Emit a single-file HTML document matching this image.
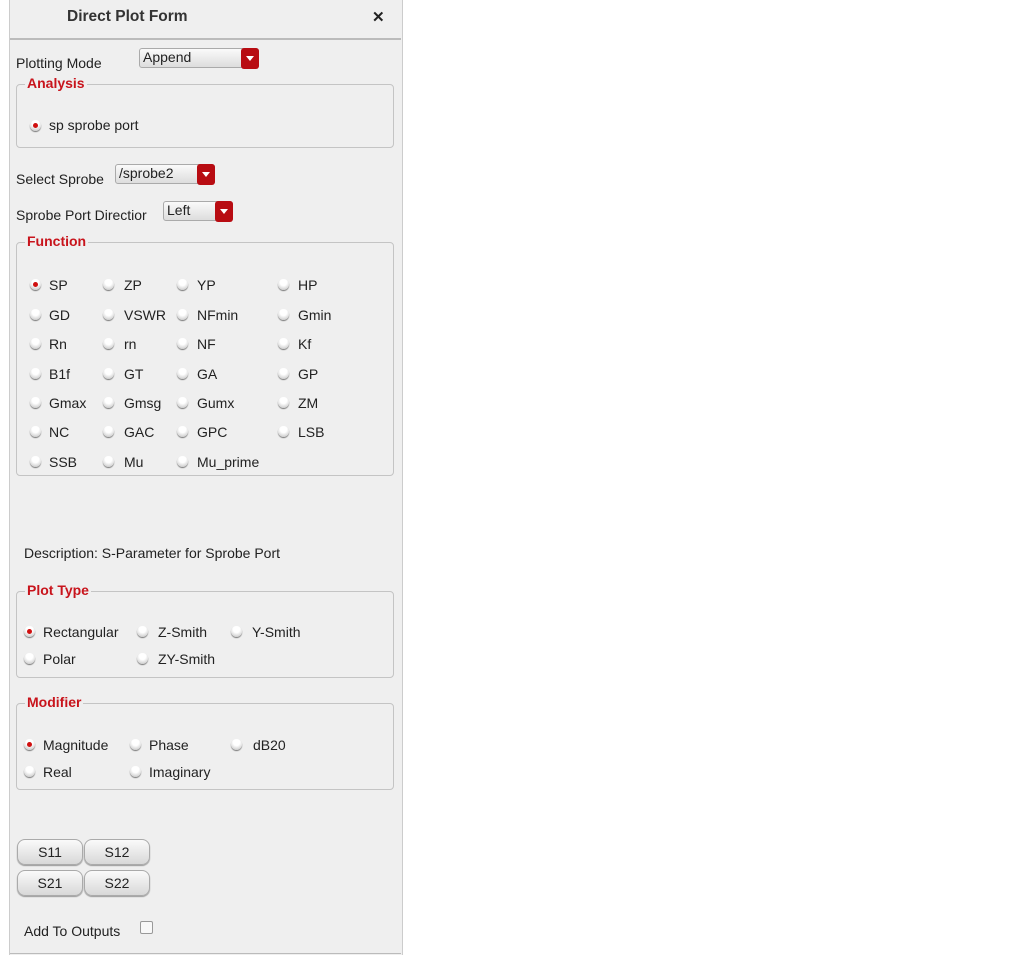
<!DOCTYPE html><html><head><style>
body{margin:0;width:1013px;height:967px;background:#fff;font-family:"Liberation Sans",sans-serif;font-size:14px;color:#222;position:relative;overflow:hidden}
.p{position:absolute;left:9px;top:0;width:392px;height:955px;background:#efefef;border-left:1px solid #ccc;border-right:1px solid #ccc}
.a{position:absolute;white-space:nowrap}
.r{position:absolute;width:11px;height:11px;border-radius:50%;background:radial-gradient(circle at 50% 30%,#fff 35%,#d4d4d4 75%,#999);box-shadow:0 1px 1px #777}
.r.s::after{content:"";position:absolute;left:3px;top:3px;width:5px;height:5px;border-radius:50%;background:#d01010}
.g{position:absolute;border:1px solid #c4c4c4;border-radius:4px}
.gt{position:absolute;color:#c8141c;font-weight:bold;background:#efefef;padding:0 2px;font-size:14px}
.dd{position:absolute;height:20px;border:1px solid #aaa;border-radius:3px;background:linear-gradient(#fafafa,#ddd);font-size:14px;line-height:16px;padding-left:3px;box-sizing:border-box}
.dd b{position:absolute;right:-1px;top:-1px;width:18px;height:21px;background:#b80c12;border-radius:3px}
.dd b::after{content:"";position:absolute;left:5px;top:8px;border:4px solid transparent;border-top:5px solid #fff;border-bottom:0}
.bt{position:absolute;width:64px;height:24px;border:1px solid #aaa;border-radius:8px;background:linear-gradient(#fafafa,#d8d8d8);text-align:center;line-height:24px;font-size:14px;box-shadow:0 1px 1px #999}
</style></head><body>
<div class="p"></div>
<div class="a" style="left:67px;top:8px;font-weight:bold;font-size:15.5px;color:#333">Direct Plot Form</div>
<div class="a" style="left:372px;top:8px;font-weight:bold;font-size:15px">✕</div>
<div class="a" style="left:10px;top:38px;width:391px;height:2px;background:#bbb"></div>

<div class="a" style="left:16px;top:55px">Plotting Mode</div>
<div class="dd" style="left:139px;top:48px;width:120px">Append<b></b></div>
<div class="g" style="left:16px;top:84px;width:376px;height:62px"></div>
<div class="gt" style="left:25px;top:75px">Analysis</div>
<div class="r s" style="left:30px;top:120px"></div><div class="a" style="left:49px;top:117px">sp sprobe port</div>

<div class="a" style="left:16px;top:171px">Select Sprobe</div>
<div class="dd" style="left:115px;top:164px;width:100px">/sprobe2<b></b></div>
<div class="a" style="left:16px;top:207px">Sprobe Port Directior</div>
<div class="dd" style="left:163px;top:201px;width:70px">Left<b></b></div>

<div class="g" style="left:16px;top:242px;width:376px;height:232px"></div>
<div class="gt" style="left:25px;top:233px">Function</div>

<div class="a" style="left:24px;top:545px">Description: S-Parameter for Sprobe Port</div>

<div class="g" style="left:16px;top:591px;width:376px;height:85px"></div>
<div class="gt" style="left:25px;top:582px">Plot Type</div>
<div class="r s" style="left:24px;top:626px"></div><div class="a" style="left:43px;top:624px">Rectangular</div>
<div class="r" style="left:137px;top:626px"></div><div class="a" style="left:158px;top:624px">Z-Smith</div>
<div class="r" style="left:231px;top:626px"></div><div class="a" style="left:252px;top:624px">Y-Smith</div>
<div class="r" style="left:24px;top:653px"></div><div class="a" style="left:43px;top:651px">Polar</div>
<div class="r" style="left:137px;top:653px"></div><div class="a" style="left:158px;top:651px">ZY-Smith</div>

<div class="g" style="left:16px;top:703px;width:376px;height:85px"></div>
<div class="gt" style="left:25px;top:694px">Modifier</div>
<div class="r s" style="left:24px;top:739px"></div><div class="a" style="left:43px;top:737px">Magnitude</div>
<div class="r" style="left:130px;top:739px"></div><div class="a" style="left:149px;top:737px">Phase</div>
<div class="r" style="left:231px;top:739px"></div><div class="a" style="left:253px;top:737px">dB20</div>
<div class="r" style="left:24px;top:766px"></div><div class="a" style="left:43px;top:764px">Real</div>
<div class="r" style="left:130px;top:766px"></div><div class="a" style="left:149px;top:764px">Imaginary</div>

<div class="bt" style="left:17px;top:839px">S11</div>
<div class="bt" style="left:84px;top:839px">S12</div>
<div class="bt" style="left:17px;top:870px">S21</div>
<div class="bt" style="left:84px;top:870px">S22</div>
<div class="a" style="left:24px;top:923px">Add To Outputs</div>
<div class="a" style="left:140px;top:921px;width:11px;height:11px;border:1px solid #999;background:#f8f8f8;border-radius:2px"></div>
<div class="a" style="left:10px;top:953px;width:391px;height:1px;background:#bbb"></div>

<div id="f"></div>
<script>
var rows=[["SP","ZP","YP","HP"],["GD","VSWR","NFmin","Gmin"],["Rn","rn","NF","Kf"],["B1f","GT","GA","GP"],["Gmax","Gmsg","Gumx","ZM"],["NC","GAC","GPC","LSB"],["SSB","Mu","Mu_prime",""]];
var rx=[30,103,177,278],tx=[49,124,197,298],ys=[285,315,344,374,403,432,462],h="";
rows.forEach(function(r,i){r.forEach(function(t,j){if(!t)return;h+='<div class="r'+(i==0&&j==0?' s':'')+'" style="left:'+rx[j]+'px;top:'+(ys[i]-6)+'px"></div><div class="a" style="left:'+tx[j]+'px;top:'+(ys[i]-8)+'px">'+t+'</div>';});});
document.getElementById("f").innerHTML=h;
</script>
</body></html>
